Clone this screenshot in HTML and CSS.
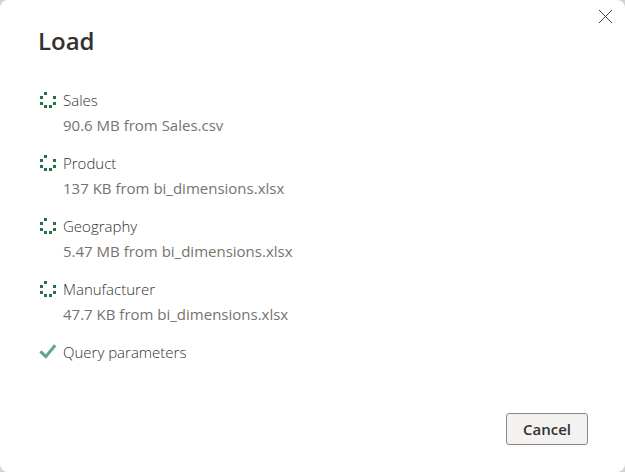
FILE: index.html
```html
<!DOCTYPE html>
<html lang="en">
<head>
    <meta charset="UTF-8">
    <meta name="viewport" content="width=device-width, initial-scale=1.0">
    <title>Load</title>
    <link rel="stylesheet" href="styles.css">
</head>
<body>
<svg class="sprite" aria-hidden="true">
    <symbol id="spinner" viewBox="0 0 16 16">
        <path d="M4 0h3v3h-3z M13 4h3v3h-3z M13 10h3v3h-3z M9 13h3v3h-3z M4 13h3v3h-3z M0 10h3v3h-3z M0 4h3v3h-3z"/>
    </symbol>
</svg>

<main class="dialog" role="dialog" aria-labelledby="dialog_title">
    <button class="close" type="button" aria-label="Close">
        <svg width="15" height="15" viewBox="0 0 15 15"><path d="M1 1L14 14M14 1L1 14"/></svg>
    </button>

    <h1 class="title" id="dialog_title">Load</h1>

    <ul class="queries">
        <li class="query">
            <svg class="icon"><use href="#spinner"/></svg>
            <span class="name">Sales</span>
            <span class="detail">90.6 MB from Sales.csv</span>
        </li>
        <li class="query">
            <svg class="icon"><use href="#spinner"/></svg>
            <span class="name">Product</span>
            <span class="detail">137 KB from bi_dimensions.xlsx</span>
        </li>
        <li class="query">
            <svg class="icon"><use href="#spinner"/></svg>
            <span class="name">Geography</span>
            <span class="detail">5.47 MB from bi_dimensions.xlsx</span>
        </li>
        <li class="query">
            <svg class="icon"><use href="#spinner"/></svg>
            <span class="name">Manufacturer</span>
            <span class="detail">47.7 KB from bi_dimensions.xlsx</span>
        </li>
        <li class="query">
            <svg class="icon done" viewBox="0 0 16 16"><path d="M0.4 7.4L5.8 12.6L15.2 1.2"/></svg>
            <span class="name">Query parameters</span>
        </li>
    </ul>

    <div class="actions">
        <button class="cancel" type="button">Cancel</button>
    </div>
</main>
</body>
</html>
```
FILE: styles.css
```css
:root {
    --text-color: #323130;
    --muted-color: #757371;
    --border-color: #8a8886;
    --green: #217346;
    --green-soft: #62a58c;
}

* {
    margin: 0;
    padding: 0;
    box-sizing: border-box;
}

body {
    font-family: 'Segoe UI', 'Open Sans', 'Noto Sans', sans-serif;
    font-size: 15px;
    color: var(--text-color);
    background: #d2d2d2;
}

.sprite {
    display: none;
}

.dialog {
    position: relative;
    display: flex;
    flex-direction: column;
    min-height: 100vh;
    padding: 24px 37px 27px 38px;
    background: #fff;
    border-radius: 8px;
}

.close {
    position: absolute;
    top: 5px;
    right: 8px;
    display: flex;
    padding: 4px;
    background: none;
    border: none;
}

.close path {
    stroke: #444;
    stroke-width: 1;
}

.title {
    font-size: 24px;
    font-weight: 600;
    line-height: 34px;
}

.queries {
    display: flex;
    flex-direction: column;
    gap: 13px;
    margin-top: 30px;
    list-style: none;
}

.query {
    display: grid;
    grid-template-columns: 16px 1fr;
    column-gap: 7px;
    padding-left: 2px;
    line-height: 25px;
}

.icon {
    width: 16px;
    height: 16px;
    margin-top: 4px;
    fill: var(--green);
}

.done {
    overflow: visible;
    fill: none;
    stroke: var(--green-soft);
    stroke-width: 3;
}

.name {
    font-weight: 300;
}

.detail {
    grid-column: 2;
    color: var(--muted-color);
}

.actions {
    display: flex;
    justify-content: flex-end;
    margin-top: auto;
}

.cancel {
    min-width: 82px;
    height: 32px;
    padding: 0 15px;
    font: inherit;
    font-weight: 600;
    color: var(--text-color);
    background: #f3f2f1;
    border: 1px solid var(--border-color);
    border-radius: 3px;
}
```
